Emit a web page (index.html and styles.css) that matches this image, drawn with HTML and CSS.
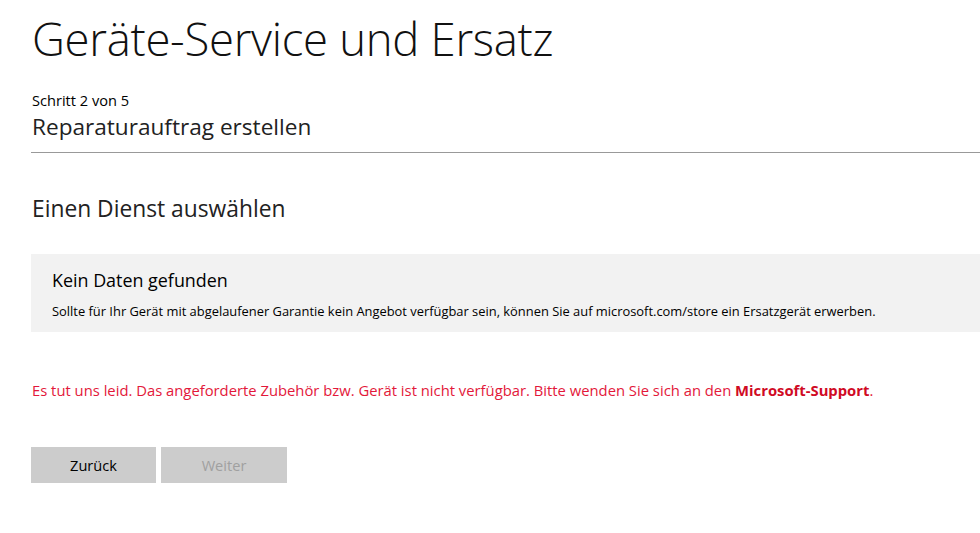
FILE: index.html
```html
<!DOCTYPE html>
<html lang="de">
<head>
<meta charset="utf-8">
<title>Geräte-Service und Ersatz</title>
<link rel="stylesheet" href="styles.css">
</head>
<body>
<main class="page">
  <h1 class="title">Geräte-Service und Ersatz</h1>
  <div class="step">
    <div class="step-count">Schritt 2 von 5</div>
    <div class="step-name">Reparaturauftrag erstellen</div>
  </div>
  <h2 class="section">Einen Dienst auswählen</h2>
  <div class="notice">
    <div class="notice-title">Kein Daten gefunden</div>
    <div class="notice-text">Sollte für Ihr Gerät mit abgelaufener Garantie kein Angebot verfügbar sein, können Sie auf microsoft.com/store ein Ersatzgerät erwerben.</div>
  </div>
  <p class="error">Es tut uns leid. Das angeforderte Zubehör bzw. Gerät ist nicht verfügbar. Bitte wenden Sie sich an den <a class="error-link" href="#">Microsoft-Support</a>.</p>
  <div class="actions">
    <button class="btn" type="button">Zurück</button>
    <button class="btn btn-disabled" type="button" disabled>Weiter</button>
  </div>
</main>
</body>
</html>
```
FILE: styles.css
```css
html, body {
  margin: 0;
  padding: 0;
  background: #ffffff;
}
body {
  font-family: "Open Sans", "Noto Sans", sans-serif;
  color: #000000;
}
.page {
  padding-left: 31px;
  padding-top: 8px;
}
.title {
  margin: 0;
  font-weight: 300;
  font-size: 45.5px;
  line-height: 60px;
  padding-left: 1px;
  letter-spacing: -0.3px;
  color: #111;
}
.step {
  margin-top: 23px;
  padding-left: 1px;
  border-bottom: 1px solid #999999;
  padding-bottom: 10px;
}
.step-count {
  font-size: 14.6px;
  line-height: 18px;
}
.step-name {
  margin-top: 3px;
  font-size: 22.6px;
  line-height: 30px;
  color: #222;
}
.section {
  margin: 41px 0 0 0;
  padding-left: 1px;
  font-weight: 400;
  font-size: 22.8px;
  line-height: 30px;
  color: #222;
}
.notice {
  margin-top: 30px;
  background: #f2f2f2;
  padding: 14px 21px 12px 21px;
}
.notice-title {
  font-size: 17.9px;
  line-height: 24px;
}
.notice-text {
  margin-top: 10px;
  font-size: 12.9px;
  line-height: 18px;
}
.error {
  margin: 48px 0 0 0;
  padding-left: 1px;
  font-size: 14.8px;
  line-height: 20px;
  color: #e3183a;
}
.error-link {
  color: #d00a24;
  font-weight: 700;
  text-decoration: none;
}
.actions {
  display: flex;
  gap: 5px;
  margin-top: 47px;
}
.btn {
  width: 125px;
  height: 36px;
  border: none;
  background: #cccccc;
  font-family: inherit;
  font-size: 14.6px;
  color: #000;
  padding: 0;
}
.btn-disabled {
  color: #a0a0a0;
  width: 126px;
}
```
